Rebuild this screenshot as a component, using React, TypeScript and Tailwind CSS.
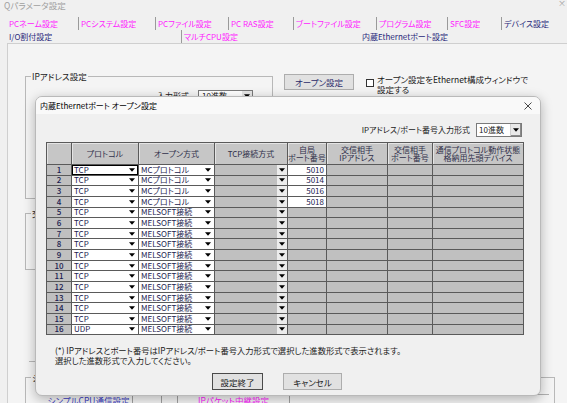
import React from "react";

type Tab = { label: string; w: string; color: string; sep: boolean };

const MAG = "text-[#ff1aff]";
const NAVY = "text-[#28287a]";

const tabRow1: Tab[] = [
  { label: "PCネーム設定", w: "w-[71px]", color: MAG, sep: false },
  { label: "PCシステム設定", w: "w-[77px]", color: MAG, sep: true },
  { label: "PCファイル設定", w: "w-[73px]", color: MAG, sep: true },
  { label: "PC RAS設定", w: "w-[65px]", color: MAG, sep: true },
  { label: "ブートファイル設定", w: "w-[83px]", color: MAG, sep: true },
  { label: "プログラム設定", w: "w-[71px]", color: MAG, sep: true },
  { label: "SFC設定", w: "w-[54px]", color: MAG, sep: true },
  { label: "デバイス設定", w: "flex-1", color: NAVY, sep: true },
];

const tabRow2: Tab[] = [
  { label: "I/O割付設定", w: "w-[174px]", color: NAVY, sep: false },
  { label: "マルチCPU設定", w: "w-[179px]", color: MAG, sep: true },
  { label: "内蔵Ethernetポート設定", w: "flex-1", color: NAVY, sep: false },
];

const headers = [
  "",
  "プロトコル",
  "オープン方式",
  "TCP接続方式",
  "自局\nポート番号",
  "交信相手\nIPアドレス",
  "交信相手\nポート番号",
  "通信プロトコル動作状態\n格納用先頭デバイス",
];

const ports = ["5010", "5014", "5016", "5018"];

const rows = Array.from({ length: 16 }, (_, i) => ({
  no: i + 1,
  proto: i === 15 ? "UDP" : "TCP",
  open: i < 4 ? "MCプロトコル" : "MELSOFT接続",
  port: ports[i] ?? "",
}));

function Arrow() {
  return (
    <svg width="6" height="4" viewBox="0 0 6 4" className="shrink-0">
      <path d="M0 0.3h6L3 3.7z" fill="#000" />
    </svg>
  );
}

function Drop({ light }: { light?: boolean }) {
  return (
    <div
      className={`flex h-full w-[10px] shrink-0 items-center justify-center ${
        light ? "bg-[#ececec]" : ""
      }`}
    >
      <Arrow />
    </div>
  );
}

function Tabs({ tabs }: { tabs: Tab[] }) {
  return (
    <div className="flex h-[13px] shrink-0 pl-[7px] text-[8px] leading-none">
      {tabs.map((t) => (
        <div
          key={t.label}
          className={`flex h-full items-center whitespace-nowrap pl-[2px] ${t.w} ${t.color} ${
            t.sep ? "border-l border-[#9a9a9a]" : ""
          }`}
        >
          {t.label}
        </div>
      ))}
    </div>
  );
}

const cell =
  "flex items-center overflow-hidden whitespace-nowrap border-b border-r border-[#5a5a5a] text-[8px] leading-none text-[#1c1c50]";

export default function App() {
  return (
    <div className="relative flex h-[403px] w-[567px] flex-col overflow-hidden bg-[#f0f0f0] font-['Noto_Sans_CJK_JP',sans-serif] text-[8.5px] leading-none text-[#1a1a1a] [font-feature-settings:'palt']">
      {/* window title */}
      <div className="flex h-[17px] shrink-0 items-start justify-between pl-[4px] pt-[1px] text-[#a0a0a0]">
        <span>Qパラメータ設定</span>
        <span className="-mt-[2px] mr-[1px] text-[8px]">×</span>
      </div>

      <Tabs tabs={tabRow1} />
      <Tabs tabs={tabRow2} />

      {/* tab page */}
      <div className="ml-[7px] min-h-0 flex-1 overflow-hidden border-l border-t border-[#cfcfcf] bg-[#f4f4f4] pl-[17px] pt-[28px]">
        <div className="flex items-start">
          <fieldset className="h-[127px] w-[248px] shrink-0 border border-[#b8b8b8] px-[5px]">
            <legend className="px-[1px] leading-none">IPアドレス設定</legend>
            <div className="mt-[9px] flex items-center justify-end gap-[9px] pr-[14px]">
              <span className="text-[8px]">入力形式</span>
              <div className="flex h-[12px] w-[55px] items-center border border-[#7a7a7a] bg-white">
                <span className="flex-1 pl-[3px] text-[8px]">10進数</span>
                <div className="flex h-full w-[10px] items-center justify-center bg-[#e6e6e6]">
                  <Arrow />
                </div>
              </div>
            </div>
          </fieldset>

          <div className="ml-[11px] mt-[2px] flex items-start">
            <button className="flex h-[16px] w-[70px] items-center justify-center border border-[#adadad] bg-[#e1e1e1] text-[8.5px] text-[#2a2a6a]">
              オープン設定
            </button>
            <div className="ml-[12px] flex items-start gap-[3px]">
              <div className="mt-[5px] h-[8px] w-[8px] border border-[#333] bg-white" />
              <span className="text-[8.5px] leading-[10px]">
                オープン設定をEthernet構成ウィンドウで
                <br />
                設定する
              </span>
            </div>
          </div>
        </div>

        <fieldset className="mt-[10px] h-[61px] w-[248px] border border-[#b8b8b8] px-[5px]">
          <legend className="px-[1px] leading-none">交信設定</legend>
        </fieldset>

        <div className="ml-[4px] mt-[91px] h-px w-[60px] bg-[#b8b8b8]" />

        <fieldset className="mt-[11px] h-[40px] w-[530px] border border-[#b8b8b8] px-[5px]">
          <legend className="px-[1px] leading-none">システム設定</legend>
          <div className="ml-[14px] mt-[12px] flex h-[12px] border-t border-[#b0b0b0] text-[8.5px]">
            <div className="flex w-[88px] items-center justify-center border-r border-[#a0a0a0] text-[#3a3ac0]">
              シンプルCPU通信設定
            </div>
            <div className="w-[29px] border-r border-[#a0a0a0]" />
            <div className="w-[16px] border-r border-[#a0a0a0]" />
            <div className="flex w-[112px] items-center justify-center border-r border-[#a0a0a0] text-[#ff1aff]">
              IPパケット中継設定
            </div>
          </div>
        </fieldset>
      </div>

      {/* dialog */}
      <div className="absolute left-[35px] top-[96px] flex h-[300px] w-[506px] flex-col overflow-hidden rounded-[7px] border border-[#b9b9b9] bg-[#f0f0f0] shadow-[0_3px_12px_rgba(0,0,0,0.28)]">
        <div className="flex h-[17px] shrink-0 items-center justify-between bg-[#f9f9f9] pl-[4px] pr-[8px]">
          <span className="text-[8px] text-black">内蔵Ethernetポート オープン設定</span>
          <svg width="8" height="8" viewBox="0 0 8 8">
            <path d="M0.5 0.5l7 7M7.5 0.5l-7 7" stroke="#333" strokeWidth="0.9" />
          </svg>
        </div>

        <div className="flex flex-1 flex-col px-[10px]">
          <div className="mt-[9px] flex items-center justify-end gap-[6px] pr-[8px]">
            <span className="text-[8px]">IPアドレス/ポート番号入力形式</span>
            <div className="flex h-[14px] w-[46px] items-center border border-[#7a7a7a] bg-white">
              <span className="flex-1 pl-[2px] text-[8px]">10進数</span>
              <div className="flex h-full w-[11px] items-center justify-center border-l border-[#d0d0d0] bg-[#e8e8e8] shadow-[inset_-1px_-1px_0_#8a8a8a]">
                <Arrow />
              </div>
            </div>
          </div>

          <div className="mt-[5px] grid w-[478px] grid-cols-[25px_67px_76px_73px_39px_61px_45px_91px] grid-rows-[22px_repeat(16,10.65px)] border-l border-t border-[#5a5a5a]">
            {headers.map((h, i) => (
              <div
                key={i}
                className={`${cell} justify-center whitespace-pre-line bg-[#c6c6c6] text-center leading-[9px] text-[#30304a] shadow-[inset_1px_1px_0_#e4e4e4]`}
              >
                {h}
              </div>
            ))}
            {rows.map((r) => (
              <React.Fragment key={r.no}>
                <div className={`${cell} justify-center bg-[#c0c0c0] font-medium text-[#1c1c5c]`}>
                  {r.no}
                </div>
                <div
                  className={`${cell} justify-between bg-white pl-[2px] pr-[1px] ${
                    r.no === 1 ? "shadow-[inset_0_0_0_1px_#000]" : ""
                  }`}
                >
                  <span>{r.proto}</span>
                  <Drop />
                </div>
                <div className={`${cell} justify-between bg-white pl-[2px] pr-[1px]`}>
                  <span>{r.open}</span>
                  <Drop />
                </div>
                <div className={`${cell} justify-end bg-[#c0c0c0]`}>
                  <Drop light />
                </div>
                <div
                  className={`${cell} justify-end pr-[2px] ${r.port ? "bg-white" : "bg-[#c0c0c0]"}`}
                >
                  {r.port}
                </div>
                <div className={`${cell} bg-[#c0c0c0]`} />
                <div className={`${cell} bg-[#c0c0c0]`} />
                <div className={`${cell} bg-[#c0c0c0]`} />
              </React.Fragment>
            ))}
          </div>

          <div className="mt-[10px] pl-[9px] text-[8.3px] leading-[10px]">
            <p>(*) IPアドレスとポート番号はIPアドレス/ポート番号入力形式で選択した進数形式で表示されます。</p>
            <p>選択した進数形式で入力してください。</p>
          </div>

          <div className="mt-[8px] flex gap-[20px] pl-[166px]">
            <button className="flex h-[17px] w-[51px] items-center justify-center border border-[#4a4a4a] bg-[#e1e1e1] text-[8.5px]">
              設定終了
            </button>
            <button className="flex h-[17px] w-[59px] items-center justify-center border border-[#adadad] bg-[#e1e1e1] text-[8.5px]">
              キャンセル
            </button>
          </div>
        </div>
      </div>
    </div>
  );
}
